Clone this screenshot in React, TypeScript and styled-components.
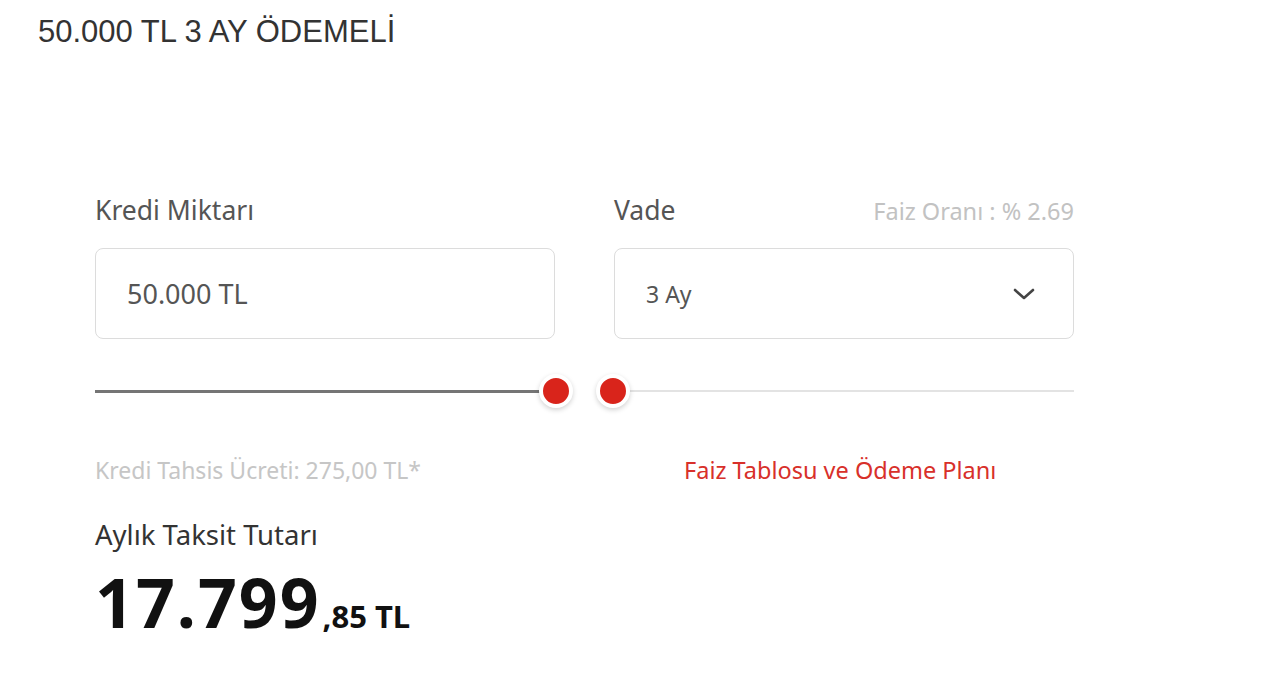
import styled, { createGlobalStyle } from 'styled-components';

const GlobalStyle = createGlobalStyle`
  body {
    margin: 0;
    background: #ffffff;
    font-family: 'Noto Sans', 'Liberation Sans', sans-serif;
  }
`;

const Page = styled.div`
  padding-top: 12px;
  min-height: 674px;
  box-sizing: border-box;
`;

const Title = styled.h1`
  margin: 0 0 0 38px;
  font-family: 'Liberation Sans', Arial, sans-serif;
  font-weight: 400;
  font-size: 31px;
  line-height: 40px;
  color: #333333;
`;

const Calculator = styled.div`
  width: 979px;
  margin: 141px 0 0 95px;
`;

const Columns = styled.div<{ $top?: number }>`
  display: grid;
  grid-template-columns: 460px 460px;
  column-gap: 59px;
  margin-top: ${(p) => p.$top ?? 0}px;
`;

const LabelRow = styled.div`
  display: flex;
  justify-content: space-between;
  align-items: baseline;
  height: 34px;
  margin-bottom: 21px;
`;

const Label = styled.span`
  font-size: 26.5px;
  line-height: 34px;
  color: #555555;
`;

const Rate = styled.span`
  font-size: 23.5px;
  color: #c2c2c2;
`;

const Box = styled.div<{ $small?: boolean }>`
  box-sizing: border-box;
  height: 91px;
  border: 1.5px solid #dcdcdc;
  border-radius: 8px;
  display: flex;
  align-items: center;
  justify-content: space-between;
  padding: 0 38px 0 31px;
  font-size: ${(p) => (p.$small ? 23 : 27)}px;
  color: #555555;
`;

const Chevron = styled.svg`
  width: 22px;
  height: 12px;
`;

const Track = styled.div<{ $active?: boolean }>`
  position: relative;
  height: 30px;
  display: flex;
  align-items: center;

  &::before {
    content: '';
    display: block;
    width: 100%;
    height: ${(p) => (p.$active ? 3 : 2)}px;
    background: ${(p) => (p.$active ? '#757575' : '#e3e3e3')};
  }
`;

const Thumb = styled.span<{ $side: 'left' | 'right' }>`
  position: absolute;
  top: 50%;
  ${(p) => p.$side}: -18px;
  width: 26px;
  height: 26px;
  margin-top: -17px;
  border-radius: 50%;
  background: #d9241b;
  border: 4px solid #ffffff;
  box-shadow: 0 2px 5px rgba(0, 0, 0, 0.18);
`;

const Fee = styled.span`
  font-size: 23px;
  line-height: 30px;
  color: #c6c6c6;
`;

const PlanLink = styled.a`
  margin-left: 70px;
  font-size: 23.5px;
  line-height: 30px;
  color: #d8302a;
  text-decoration: none;
`;

const ResultLabel = styled.div`
  margin-top: 33px;
  font-size: 27.5px;
  line-height: 34px;
  color: #333333;
`;

const Amount = styled.div`
  margin-top: 16px;
  font-weight: 700;
  color: #111111;
  line-height: 1;
  white-space: nowrap;
`;

const Whole = styled.span`
  font-size: 68px;
  letter-spacing: 2px;
`;

const Fraction = styled.span`
  font-size: 31px;
  margin-left: 2px;
`;

export default function App() {
  return (
    <Page>
      <GlobalStyle />
      <Title>50.000 TL 3 AY ÖDEMELİ</Title>
      <Calculator>
        <Columns>
          <div>
            <LabelRow>
              <Label>Kredi Miktarı</Label>
            </LabelRow>
            <Box>50.000 TL</Box>
          </div>
          <div>
            <LabelRow>
              <Label>Vade</Label>
              <Rate>Faiz Oranı : % 2.69</Rate>
            </LabelRow>
            <Box $small>
              3 Ay
              <Chevron viewBox="0 0 22 12" fill="none">
                <path d="M2 2l9 8 9-8" stroke="#444" strokeWidth="2.6" strokeLinecap="round" strokeLinejoin="round" />
              </Chevron>
            </Box>
          </div>
        </Columns>

        <Columns $top={37}>
          <Track $active>
            <Thumb $side="right" />
          </Track>
          <Track>
            <Thumb $side="left" />
          </Track>
        </Columns>

        <Columns $top={49}>
          <Fee>Kredi Tahsis Ücreti: 275,00 TL*</Fee>
          <PlanLink href="#">Faiz Tablosu ve Ödeme Planı</PlanLink>
        </Columns>

        <ResultLabel>Aylık Taksit Tutarı</ResultLabel>
        <Amount>
          <Whole>17.799</Whole>
          <Fraction>,85 TL</Fraction>
        </Amount>
      </Calculator>
    </Page>
  );
}
